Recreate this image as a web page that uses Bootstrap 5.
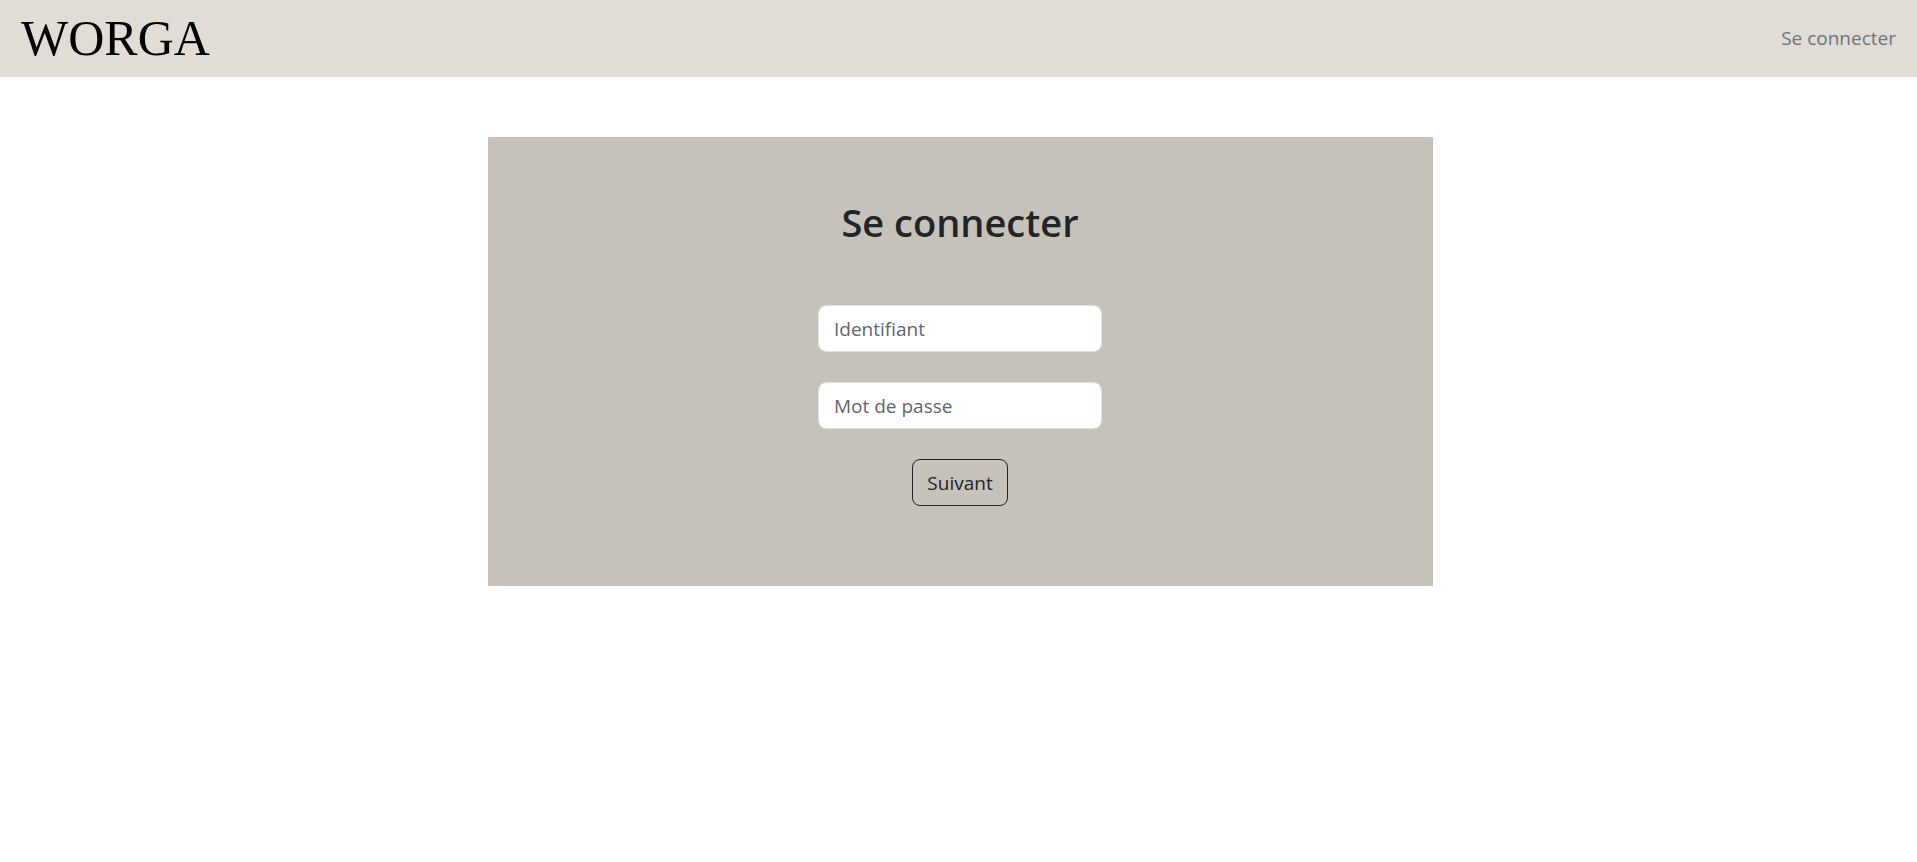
<!DOCTYPE html>
<html lang="fr">
<head>
<meta charset="utf-8">
<meta name="viewport" content="width=device-width, initial-scale=1">
<title>Worga</title>
<link href="https://cdn.jsdelivr.net/npm/bootstrap@5.3.0/dist/css/bootstrap.min.css" rel="stylesheet">
<style>
  html { font-size: 20px; }
  body { font-family: "Open Sans", "Noto Sans", sans-serif; font-size: 19px; }
  .site-bar { background: #e1dcd6; min-height: 77px; padding: 0 6px; }
  .brand-word { font-family: "Liberation Serif", serif; font-size: 50px; line-height: 56px; color: #000; }
  .bar-link { color: #6c757d; }
  .login-main { padding: 60px 0 0 3px; }
  .login-panel { background: #c7c2b9; max-width: 945px; }
  .login-title { font-size: 38px; line-height: 50px; font-weight: 600; margin-bottom: 58px; }
  .login-form { max-width: 284px; }
  .login-form .form-control, .login-form .btn { font-size: 19px; line-height: 30px; border-radius: 8px; }
  .login-form .form-control { height: 47px; }
  .login-form .btn { padding-left: 14px; padding-right: 14px; }
  .login-form .form-control::placeholder { color: #5f666d; }
</style>
</head>
<body>
<header>
  <nav class="navbar site-bar border-bottom">
    <div class="container-fluid">
      <a class="navbar-brand brand-word p-0 m-0" href="#">WORGA</a>
      <a class="nav-link bar-link" href="#">Se connecter</a>
    </div>
  </nav>
</header>
<main class="login-main">
  <section class="login-panel mx-auto p-5 text-center">
    <h1 class="login-title">Se connecter</h1>
    <form class="login-form mx-auto">
      <input class="form-control mb-4" type="text" placeholder="Identifiant" aria-label="Identifiant">
      <input class="form-control mb-4" type="password" placeholder="Mot de passe" aria-label="Mot de passe">
      <button class="btn btn-outline-dark mb-3" type="submit">Suivant</button>
    </form>
  </section>
</main>
<script src="https://cdn.jsdelivr.net/npm/bootstrap@5.3.0/dist/js/bootstrap.bundle.min.js"></script>
</body>
</html>
